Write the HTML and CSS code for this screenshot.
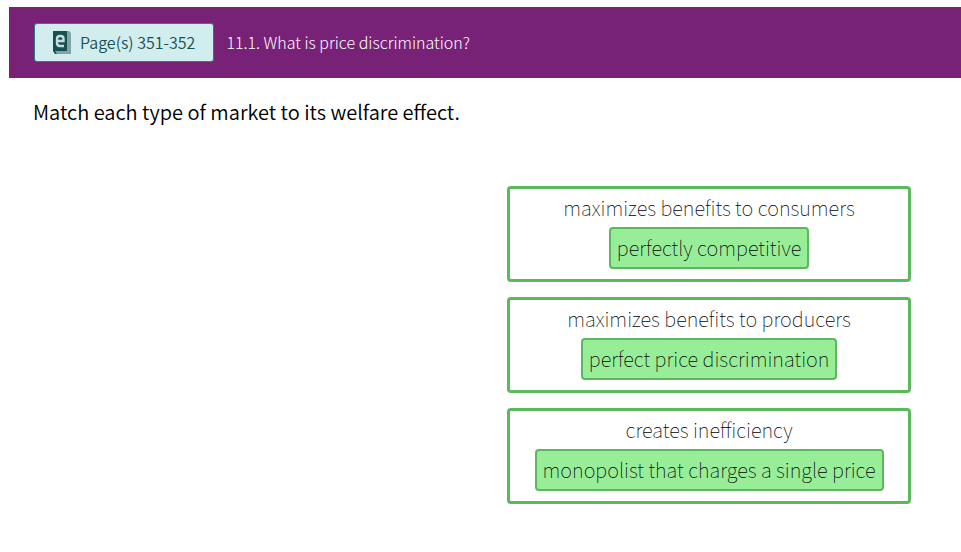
FILE: index.html
```html
<!DOCTYPE html>
<html lang="en">
<head>
  <meta charset="UTF-8" />
  <meta name="viewport" content="width=device-width, initial-scale=1" />
  <title>11.1. What is price discrimination?</title>
  <link rel="stylesheet" href="styles.css">
</head>
<body>
  <header class="question-bar">
    <button type="button" class="page-btn">
      <svg class="book-icon" width="18" height="23" viewBox="0 0 18 23" aria-hidden="true">
        <path d="M14 0h2l2 2v21H3l-3-3 14-1z" fill="#7da5a5" />
        <path d="M0 0h14v20H2l2 3H2l-2-3z" fill="#184f50" />
        <path d="M4 10h6.500V7.500Q10.500 5 7.500 5H7Q4 5 4 8v4q0 3 3 3h4" fill="none" stroke="#c5dede" stroke-width="2.400" />
      </svg>
      Page(s) 351-352
    </button>
    <span class="section-title">11.1. What is price discrimination?</span>
  </header>

  <main class="question">
    <p class="prompt">Match each type of market to its welfare effect.</p>

    <div class="targets">
      <section class="target">
        <div class="target-label">maximizes benefits to consumers</div>
        <div class="answer">perfectly competitive</div>
      </section>
      <section class="target">
        <div class="target-label">maximizes benefits to producers</div>
        <div class="answer">perfect price discrimination</div>
      </section>
      <section class="target">
        <div class="target-label">creates inefficiency</div>
        <div class="answer">monopolist that charges a single price</div>
      </section>
    </div>
  </main>
</body>
</html>
```
FILE: styles.css
```css
:root {
  --purple: #782277;
  --teal: #184f50;
  --green: #5cb85c;
  --light-green: #98ee98;
}
* {
  box-sizing: border-box;
}
body {
  margin: 7px 0 0 9px;
  background: #fff;
  color: #000;
  font-family: "Noto Sans CJK SC", "Noto Sans", sans-serif;
  font-size: 20px;
  font-weight: 350;
  line-height: 32px;
}
.question-bar {
  display: flex;
  align-items: center;
  gap: 12px;
  padding: 16px 25px;
  background: var(--purple);
  color: #fff;
  font-size: 16px;
  line-height: 23px;
}
.section-title {
  font-weight: 300;
}
.page-btn {
  display: flex;
  align-items: center;
  gap: 9px;
  padding: 7px 18px;
  border: 1px solid #347a80;
  border-radius: 3px;
  background: #d2eded;
  color: var(--teal);
  font: inherit;
  cursor: pointer;
}
.question {
  padding: 18px 50px 0 24px;
}
.prompt {
  margin: 0;
}
.targets {
  display: flex;
  flex-direction: column;
  gap: 15px;
  width: 46%;
  margin-top: 58px;
  margin-left: auto;
  font-weight: 100;
}
.target {
  display: flex;
  flex-direction: column;
  align-items: center;
  gap: 3px;
  padding: 3px 10px 10px;
  border: 3px solid var(--green);
  border-radius: 4px;
}
.answer {
  padding: 3px 6px;
  border: 2px solid var(--green);
  border-radius: 4px;
  background: var(--light-green);
}
```
